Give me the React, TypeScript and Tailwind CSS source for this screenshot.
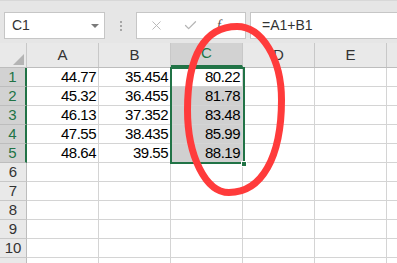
import { X, Check } from 'lucide-react'

const cols = ['A', 'B', 'C', 'D', 'E', '']
const data: Record<number, string[]> = {
  1: ['44.77', '35.454', '80.22'],
  2: ['45.32', '36.455', '81.78'],
  3: ['46.13', '37.352', '83.48'],
  4: ['47.55', '38.435', '85.99'],
  5: ['48.64', '39.55', '88.19'],
}
const rows = [1, 2, 3, 4, 5, 6, 7, 8, 9, 10, 11]

export default function App() {
  return (
    <div
      className="relative w-[397px] h-[263px] overflow-hidden bg-white text-[#222]"
      style={{ fontFamily: '"Liberation Sans", Arial, sans-serif' }}
    >
      {/* Formula bar */}
      <div className="h-[43px] bg-[#e6e6e6] border-t border-[#d8d8d8] flex items-start pt-[11px] pl-[4px]">
        <div className="w-[101px] h-[27px] bg-white border border-[#c6c6c6] flex items-center justify-between pl-[7px] pr-[5px]">
          <span className="text-[14px] text-[#333]">C1</span>
          <span className="w-0 h-0 border-l-[4px] border-r-[4px] border-t-[4px] border-l-transparent border-r-transparent border-t-[#7a7a7a]" />
        </div>
        <div className="w-[31px] h-[27px] flex flex-col items-center justify-center gap-[2px]">
          <span className="w-[2px] h-[2px] bg-[#a6a6a6]" />
          <span className="w-[2px] h-[2px] bg-[#a6a6a6]" />
          <span className="w-[2px] h-[2px] bg-[#a6a6a6]" />
        </div>
        <div className="w-[110px] h-[27px] bg-white border border-[#c6c6c6] flex items-center pl-[12px] gap-[19px]">
          <X className="w-[15px] h-[15px] text-[#b5b5b5]" strokeWidth={1.5} />
          <Check className="w-[15px] h-[15px] text-[#b5b5b5]" strokeWidth={2} />
          <span className="text-[14px] italic text-[#555]" style={{ fontFamily: '"Liberation Serif", serif' }}>f</span>
        </div>
        <div className="ml-[4px] flex-1 h-[27px] bg-white border border-[#c6c6c6] border-r-0 flex items-center pl-[11px]">
          <span className="text-[14px] text-[#333]">=A1+B1</span>
        </div>
      </div>

      {/* Column headers */}
      <div className="flex h-[25px] bg-[#e9e9e9] border-b border-[#bdbdbd]">
        <div className="w-[27px] shrink-0 border-r border-[#c8c8c8] relative">
          <span className="absolute right-[2px] bottom-[2px] w-0 h-0 [border-bottom:11px_solid_#b4b4b4] [border-left:11px_solid_transparent]" />
        </div>
        {cols.map((c, i) => (
          <div
            key={i}
            className={`w-[72px] shrink-0 border-r border-[#c8c8c8] flex items-end justify-center pb-[1px] text-[15px] ${
              c === 'C' ? 'bg-[#d2d2d2] text-[#217346] border-b-2 border-b-[#217346]' : 'text-[#333]'
            }`}
          >
            {c}
          </div>
        ))}
      </div>

      {/* Rows */}
      {rows.map((r) => {
        const sel = r <= 5
        return (
          <div key={r} className="flex h-[19px]">
            <div
              className={`w-[27px] shrink-0 border-b flex items-center justify-center text-[15px] ${
                sel
                  ? 'bg-[#d2d2d2] text-[#217346] border-[#bdbdbd] border-r-2 border-r-[#217346]'
                  : 'bg-[#e9e9e9] text-[#333] border-[#c8c8c8] border-r border-r-[#bdbdbd]'
              }`}
            >
              {r <= 10 ? r : ''}
            </div>
            {cols.map((c, i) => {
              const v = data[r]?.[i]
              const grey = c === 'C' && r >= 2 && r <= 5
              return (
                <div
                  key={i}
                  className={`w-[72px] shrink-0 border-r border-b border-[#d4d4d4] flex items-center justify-end pr-[2px] text-[15px] tracking-[-0.5px] text-black ${
                    grey ? 'bg-[#d0d0d0]' : ''
                  }`}
                >
                  {v}
                </div>
              )
            })}
          </div>
        )
      })}

      {/* Selection */}
      <div className="absolute left-[170px] top-[67px] w-[75px] h-[97px] border-2 border-[#217346] pointer-events-none" />
      <div className="absolute left-[241px] top-[161px] w-[6px] h-[6px] bg-[#217346] border border-white" />

      {/* Red hand-drawn loop */}
      <svg className="absolute inset-0 pointer-events-none" width="397" height="263">
        <path
          d="M237 26.5 C261.9 26.5 281.5 58.8 281.5 100 C281.5 157.4 261.6 192.5 229 192.5 C205.8 192.5 187.5 156.2 187.5 110 C187.5 55.7 204.8 26.5 237 26.5 Z"
          fill="none"
          stroke="#ff3b3b"
          strokeWidth="7"
        />
      </svg>
    </div>
  )
}
